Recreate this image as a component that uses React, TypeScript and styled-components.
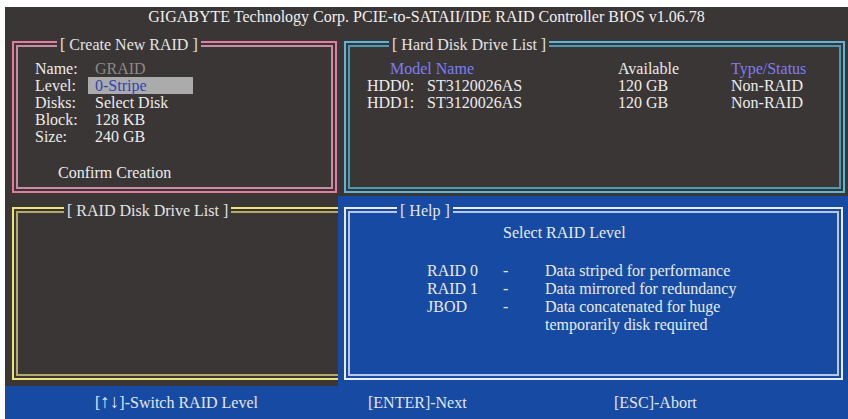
import React from 'react';
import styled, { createGlobalStyle } from 'styled-components';

const DARK = '#3a3635';
const BLUE = '#174ba3';

const GlobalStyle = createGlobalStyle`
  html, body {
    margin: 0;
    background: #ffffff;
  }
`;

const Page = styled.div`
  padding: 7px 0 0 5px;
`;

const Screen = styled.div`
  width: 843px;
  height: 412px;
  background: ${DARK};
  color: #e6e6e6;
  font-family: 'Liberation Serif', 'Times New Roman', serif;
  font-size: 16px;
  display: flex;
  flex-direction: column;
`;

const TitleBar = styled.div`
  height: 34px;
  box-sizing: border-box;
  padding-top: 1px;
  line-height: 18px;
  text-align: center;
  color: #f0f0f0;
`;

const TopRow = styled.div`
  height: 152px;
  display: grid;
  grid-template-columns: 325px 501px;
  column-gap: 7px;
  padding-left: 7px;
`;

const BottomRow = styled.div`
  height: 193px;
  display: grid;
  grid-template-columns: 333px 1fr;
`;

const LeftCell = styled.div`
  padding: 14px 0 6px 7px;
  overflow: hidden;
  display: flex;
`;

const HelpCell = styled.div`
  margin-top: 3px;
  background: ${BLUE};
  padding: 11px 5px 6px 6px;
  display: flex;
`;

const Panel = styled.div<{ $outer: string; $inner: string; $bg: string; $open?: boolean }>`
  position: relative;
  flex: 1;
  box-sizing: border-box;
  border: 2px solid ${(p) => p.$outer};
  box-shadow: inset 0 0 0 2px ${(p) => p.$bg}, inset 0 0 0 4px ${(p) => p.$inner};
  margin-right: ${(p) => (p.$open ? '-12px' : '0')};
`;

const PanelTitle = styled.div<{ $bg: string; $offset: number }>`
  position: absolute;
  top: -7px;
  left: ${(p) => p.$offset}px;
  padding: 0 3px;
  line-height: 18px;
  background: ${(p) => p.$bg};
  color: #e4e4e4;
  white-space: nowrap;
`;

const FieldList = styled.div`
  padding: 17px 0 0 21px;
  display: grid;
  grid-template-columns: 53px 1fr;
  line-height: 17px;
`;

const Label = styled.div`
  color: #ececec;
`;

const Value = styled.div<{ $tone?: 'dim' | 'selected' }>`
  padding-left: 7px;
  width: 105px;
  box-sizing: border-box;
  white-space: nowrap;
  color: ${(p) => (p.$tone === 'dim' ? '#8c8a89' : p.$tone === 'selected' ? '#2f45b9' : '#ececec')};
  background: ${(p) => (p.$tone === 'selected' ? '#ababab' : 'transparent')};
`;

const Confirm = styled.div`
  margin: 19px 0 0 44px;
  line-height: 17px;
  color: #ececec;
`;

const DiskTable = styled.div`
  padding: 17px 0 0 21px;
  display: grid;
  grid-template-columns: 60px 191px 113px 1fr;
  line-height: 17px;
  color: #ececec;
`;

const HeadCell = styled.div<{ $span?: number; $indent?: number }>`
  color: #7f7df5;
  grid-column: span ${(p) => p.$span ?? 1};
  padding-left: ${(p) => p.$indent ?? 0}px;
  white-space: nowrap;
`;

const Cell = styled.div<{ $pre?: boolean }>`
  white-space: ${(p) => (p.$pre ? 'pre' : 'nowrap')};
`;

const HelpBody = styled.div`
  padding: 15px 0 0 0;
  color: #e6eaf2;
  line-height: 18px;
`;

const HelpHeading = styled.div`
  padding-left: 157px;
`;

const HelpGrid = styled.div`
  margin-top: 20px;
  padding-left: 81px;
  display: grid;
  grid-template-columns: 76px 42px 1fr;
`;

const Footer = styled.div`
  height: 33px;
  background: ${BLUE};
  color: #e2e6ef;
  display: flex;
  align-items: center;
  padding-left: 90px;
  line-height: 33px;
`;

const FooterItem = styled.div<{ $w?: number }>`
  width: ${(p) => (p.$w ? `${p.$w}px` : 'auto')};
  white-space: nowrap;
`;

const Arrows = styled.span`
  font-size: 19px;
  line-height: 0;
`;

const fields = [
  { label: 'Name:', value: 'GRAID', tone: 'dim' as const },
  { label: 'Level:', value: '0-Stripe', tone: 'selected' as const },
  { label: 'Disks:', value: 'Select Disk' },
  { label: 'Block:', value: '128 KB' },
  { label: 'Size:', value: '240 GB' },
];

const disks = [
  { id: 'HDD0:', model: 'ST3120026AS', size: '120 GB', status: 'Non-RAID' },
  { id: 'HDD1:', model: 'ST3120026AS', size: '120 GB', status: 'Non-RAID' },
];

const levels = [
  { name: 'RAID 0', text: 'Data striped for performance' },
  { name: 'RAID 1', text: 'Data mirrored for redundancy' },
  { name: 'JBOD', text: 'Data concatenated for huge\ntemporarily disk required' },
];

export default function App() {
  return (
    <Page>
      <GlobalStyle />
      <Screen>
        <TitleBar>GIGABYTE Technology Corp. PCIE-to-SATAII/IDE RAID Controller BIOS v1.06.78</TitleBar>

        <TopRow>
          <Panel $outer="#e57b9f" $inner="#c98ba6" $bg={DARK}>
            <PanelTitle $bg={DARK} $offset={43}>[ Create New RAID ]</PanelTitle>
            <FieldList>
              {fields.map((f) => (
                <React.Fragment key={f.label}>
                  <Label>{f.label}</Label>
                  <Value $tone={f.tone}>{f.value}</Value>
                </React.Fragment>
              ))}
            </FieldList>
            <Confirm>Confirm Creation</Confirm>
          </Panel>

          <Panel $outer="#5cb6d6" $inner="#4b9ab6" $bg={DARK}>
            <PanelTitle $bg={DARK} $offset={43}>[ Hard Disk Drive List ]</PanelTitle>
            <DiskTable>
              <HeadCell $span={2} $indent={23}>Model Name</HeadCell>
              <Cell>Available</Cell>
              <HeadCell>Type/Status</HeadCell>
              {disks.map((d) => (
                <React.Fragment key={d.id}>
                  <Cell>{d.id}</Cell>
                  <Cell>{d.model}</Cell>
                  <Cell>{d.size}</Cell>
                  <Cell>{d.status}</Cell>
                </React.Fragment>
              ))}
            </DiskTable>
          </Panel>
        </TopRow>

        <BottomRow>
          <LeftCell>
            <Panel $outer="#f0e07a" $inner="#b4ab68" $bg={DARK} $open>
              <PanelTitle $bg={DARK} $offset={50}>[ RAID Disk Drive List ]</PanelTitle>
            </Panel>
          </LeftCell>

          <HelpCell>
            <Panel $outer="#e9eef8" $inner="#b9c7e6" $bg={BLUE}>
              <PanelTitle $bg={BLUE} $offset={51}>[ Help ]</PanelTitle>
              <HelpBody>
                <HelpHeading>Select RAID Level</HelpHeading>
                <HelpGrid>
                  {levels.map((l) => (
                    <React.Fragment key={l.name}>
                      <Cell>{l.name}</Cell>
                      <Cell>-</Cell>
                      <Cell $pre>{l.text}</Cell>
                    </React.Fragment>
                  ))}
                </HelpGrid>
              </HelpBody>
            </Panel>
          </HelpCell>
        </BottomRow>

        <Footer>
          <FooterItem $w={273}>
            [<Arrows>↑↓</Arrows>]-Switch RAID Level
          </FooterItem>
          <FooterItem $w={246}>[ENTER]-Next</FooterItem>
          <FooterItem>[ESC]-Abort</FooterItem>
        </Footer>
      </Screen>
    </Page>
  );
}
